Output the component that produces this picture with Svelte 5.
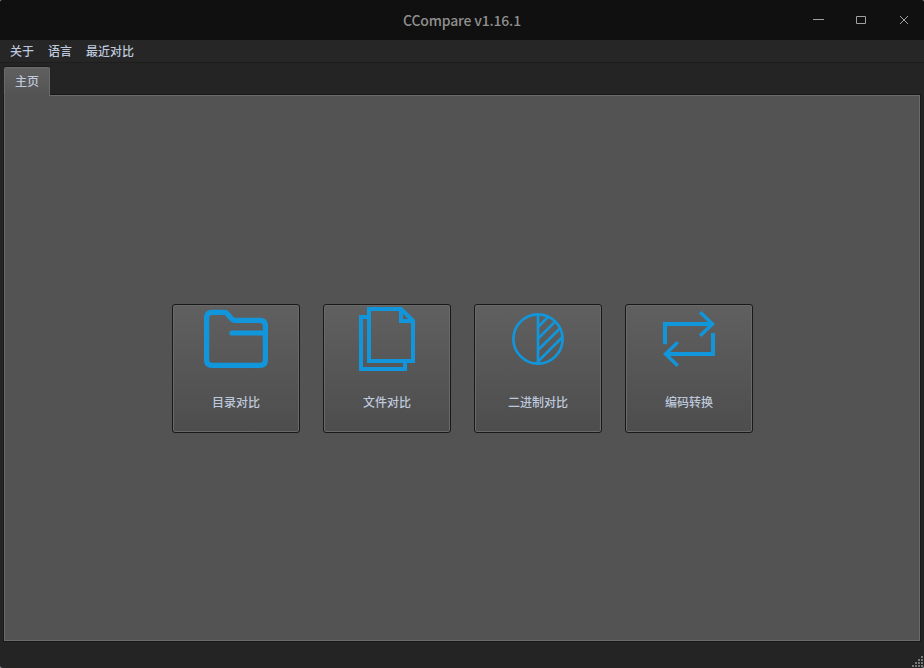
<script>
  const menus = ['关于', '语言', '最近对比'];
  const actions = [
    { id: 'folder', label: '目录对比' },
    { id: 'files', label: '文件对比' },
    { id: 'binary', label: '二进制对比' },
    { id: 'convert', label: '编码转换' }
  ];
  const gripDots = [
    [9, 0], [6, 3], [9, 3], [3, 6], [6, 6], [9, 6], [0, 9], [3, 9], [6, 9], [9, 9]
  ];
</script>

<div class="window">
  <header class="titlebar">
    <span class="title">CCompare v1.16.1</span>
    <div class="controls">
      <svg width="12" height="12" viewBox="0 0 12 12"><path d="M1 5.5H12" /></svg>
      <svg width="12" height="12" viewBox="0 0 12 12"><path d="M1.5 2.5h9v7h-9z" /></svg>
      <svg width="12" height="12" viewBox="0 0 12 12"><path d="M2 2l8 8M10 2l-8 8" /></svg>
    </div>
  </header>

  <nav class="menubar">
    {#each menus as menu}
      <span>{menu}</span>
    {/each}
  </nav>

  <div class="tabs"><div class="tab">主页</div></div>

  <main class="page">
    {#each actions as action}
      <button class="action">
        <svg class="icon" width="64" height="64" viewBox="0 0 64 64">
          {#if action.id === 'folder'}
            <g stroke-width="5.2" stroke-linejoin="round">
              <path d="M8.2 5.4H20.5q1.6 0 2.7 1.3l4.4 5.1q1.2 1.5 3 1.5H56q5.4 0 5.4 5.3V53q0 5.4-5.4 5.4H8.2Q2.6 58.4 2.6 53V10.8Q2.6 5.4 8.2 5.4z" />
              <path d="M28 26H61" stroke-linecap="round" />
            </g>
          {:else if action.id === 'files'}
            <g stroke-width="4">
              <path d="M14 2H46.1L58 13.9V54H14z" />
              <path d="M46 2V14H58" />
              <path d="M12 10H6V62H50V56" />
            </g>
          {:else if action.id === 'binary'}
            <g stroke-width="2.7">
              <circle cx="32" cy="32" r="24.6" />
              <path d="M32 7V57" />
              <path d="M32 20L42 10M32 31.7L49 14.6M32 43L54.7 20.7M32 54.5L57 29.5" />
            </g>
          {:else}
            <g stroke-width="4">
              <path d="M8 37.3V17H55" />
              <path d="M56 26V47H9" />
              <path d="M43.2 5.2L55.5 17L43.2 28.8M20.8 35.2L8.5 47L20.8 58.8" stroke-width="3.4" />
            </g>
          {/if}
        </svg>
        <span class="label">{action.label}</span>
      </button>
    {/each}
  </main>

  <footer class="statusbar">
    <svg class="grip" width="11" height="11" viewBox="0 0 11 11">
      {#each gripDots as [x, y]}
        <rect {x} {y} width="2" height="2" />
      {/each}
    </svg>
  </footer>
</div>

<style>
  :global(body) {
    margin: 0;
    background: #7f8790;
  }

  .window {
    display: flex;
    flex-direction: column;
    width: 924px;
    height: 668px;
    box-sizing: border-box;
    overflow: hidden;
    border-radius: 3px;
    background: #242424;
    color: #bec8dc;
    font: 12px/18px "Noto Sans CJK SC", sans-serif;
    font-weight: 500;
  }

  .titlebar {
    display: grid;
    grid-template-columns: 1fr auto 1fr;
    align-items: center;
    flex: none;
    height: 40px;
    background: #101010;
  }

  .title {
    grid-column: 2;
    color: #8f8f8f;
    font-size: 14px;
    line-height: 20px;
    letter-spacing: -0.17px;
  }

  .controls {
    display: flex;
    justify-content: flex-end;
    gap: 31px;
    padding-right: 14px;
  }

  .controls svg {
    display: block;
    fill: none;
    stroke: #a0a09c;
    stroke-width: 1;
  }

  .menubar {
    display: flex;
    align-items: center;
    gap: 14px;
    flex: none;
    height: 23px;
    box-sizing: border-box;
    padding-left: 10px;
    border-bottom: 1px solid #1d1d1d;
    background: #262626;
  }

  .tabs {
    flex: none;
    height: 32px;
    box-sizing: border-box;
    padding: 4px 0 0 4px;
  }

  .tab {
    position: relative;
    z-index: 1;
    width: 46px;
    height: 29px;
    box-sizing: border-box;
    border: 1px solid #6a6a6a;
    border-bottom: 0;
    border-radius: 2px 2px 0 0;
    box-shadow: 0 -1px 0 #191919;
    background: linear-gradient(#606060, #535353);
    line-height: 25px;
    text-align: center;
  }

  .page {
    display: flex;
    align-items: center;
    justify-content: center;
    gap: 23px;
    flex: none;
    height: 546px;
    box-sizing: border-box;
    margin: 0 4px;
    padding-top: 1px;
    border: 1px solid #6a6a6a;
    box-shadow: 0 0 0 1px #191919;
    background: #535353;
  }

  .action {
    display: flex;
    flex-direction: column;
    align-items: center;
    width: 128px;
    height: 129px;
    box-sizing: border-box;
    margin: 0;
    padding: 2px 0 0;
    border: 1px solid #191919;
    border-radius: 3px;
    box-shadow: inset 0 0 0 1px #696969;
    background: linear-gradient(#606060, #4d4d4d);
    color: inherit;
    font: inherit;
  }

  .icon {
    display: block;
    fill: none;
    stroke: #1296db;
  }

  .label {
    margin-top: 22px;
    padding-left: 1px;
  }

  .statusbar {
    display: flex;
    align-items: flex-end;
    justify-content: flex-end;
    flex: 1;
    padding-right: 1px;
  }

  .grip {
    display: block;
    margin-bottom: 1px;
    fill: #777;
  }
</style>
